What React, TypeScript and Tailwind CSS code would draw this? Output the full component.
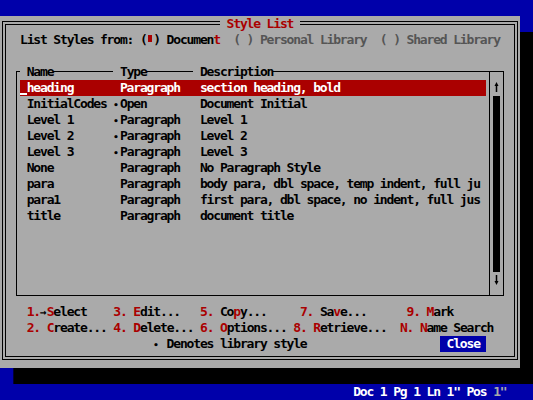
const RED = "text-[#aa0000]";
const DIM = "text-[#555555]";

type Piece = [string, string?];

const styles = [
  { name: "InitialCodes", lib: true, type: "Open", desc: "Document Initial" },
  { name: "Level 1", lib: true, type: "Paragraph", desc: "Level 1" },
  { name: "Level 2", lib: true, type: "Paragraph", desc: "Level 2" },
  { name: "Level 3", lib: true, type: "Paragraph", desc: "Level 3" },
  { name: "None", lib: false, type: "Paragraph", desc: "No Paragraph Style" },
  { name: "para", lib: false, type: "Paragraph", desc: "body para, dbl space, temp indent, full ju" },
  { name: "para1", lib: false, type: "Paragraph", desc: "first para, dbl space, no indent, full jus" },
  { name: "title", lib: false, type: "Paragraph", desc: "document title" },
];

// small glyphs keep the 6.66px cell width
const SMALL = "text-[9px] tracking-[1.245px]";
const ARROW = "text-[11px] tracking-[0.04px]";

const menu: Piece[][] = [
  [
    ["    "], ["1.", RED], ["→", ARROW], ["S", RED], ["elect    "],
    ["3.", RED], [" "], ["E", RED], ["dit...   "],
    ["5.", RED], [" Co"], ["p", RED], ["y...     "],
    ["7.", RED], [" Sa"], ["v", RED], ["e...      "],
    ["9.", RED], [" "], ["M", RED], ["ark"],
  ],
  [
    ["    "], ["2.", RED], [" "], ["C", RED], ["reate... "],
    ["4.", RED], [" "], ["D", RED], ["elete... "],
    ["6.", RED], [" "], ["O", RED], ["ptions... "],
    ["8.", RED], [" "], ["R", RED], ["etrieve...  "],
    ["N.", RED], [" "], ["N", RED], ["ame Search"],
  ],
];

function Line({ parts }: { parts: Piece[] }) {
  return (
    <div className="h-4 leading-4 whitespace-pre">
      {parts.map(([t, c], i) => (
        <span key={i} className={c}>
          {t}
        </span>
      ))}
    </div>
  );
}

function Arrow({ down }: { down?: boolean }) {
  return (
    <svg width="7" height="16" viewBox="0 0 7 16" className="ml-[3px] shrink-0">
      <path
        d={down ? "M3.5 13 L1.5 9 H2.75 V3 H4.25 V9 H5.5 Z" : "M3.5 2 L1.5 6 H2.75 V12 H4.25 V6 H5.5 Z"}
        fill="#000"
      />
    </svg>
  );
}

function StyleList() {
  return (
    <div className="flex h-[240px] flex-col">
      <div className="ml-[16px] mt-[7px] flex h-[225px] w-[488px] border border-black">
        <div className="w-[472px]">
          <div className="-ml-[17px] -mt-[8px] flex flex-col">
            <Line
              parts={[
                ["   "],
                [" Name", "bg-[#aaaaaa]"],
                ["         "],
                [" Type", "bg-[#aaaaaa]"],
                ["       "],
                [" Description", "bg-[#aaaaaa]"],
              ]}
            />
            <div className="h-4 leading-4 whitespace-pre">
              {"   "}
              <span className="inline-block h-4 w-[466px] bg-[#aa0000] align-top text-white">
                <span className="inline-block h-[15px] w-[6.6625px] border-b-2 border-white align-top" />
                {"heading".padEnd(14) + "Paragraph".padEnd(12) + "section heading, bold"}
              </span>
            </div>
            {styles.map((s) => (
              <div key={s.name} className="h-4 leading-4 whitespace-pre">
                {"    " + s.name.padEnd(13)}
                <span className={SMALL}>{s.lib ? "•" : " "}</span>
                {s.type.padEnd(12) + s.desc}
              </div>
            ))}
          </div>
        </div>
        <div className="flex w-[14px] flex-col border-l border-black pt-[8px]">
          <Arrow />
          <div className="ml-[3px] h-[176px] w-[7px] bg-black" />
          <Arrow down />
        </div>
      </div>
    </div>
  );
}

export default function App() {
  return (
    <div className="flex h-[400px] w-[533px] flex-col overflow-hidden bg-[#0000aa] font-['DejaVu_Sans_Mono',monospace] text-[13px] font-bold tracking-[-1.163px] text-black">
      <div className="h-4 shrink-0" />
      <div className="h-[352px] w-[520px] shrink-0 bg-[#aaaaaa] px-[2px] pt-[5px] shadow-[13.33px_16px_0_0_#000]">
        <div className="h-[339px] border border-black p-[2px]">
          <div className="h-[333px] border border-black">
            <div className="-ml-[6px] -mt-[9px] flex flex-col">
              <div className="h-4 leading-4 whitespace-pre">
                {" ".repeat(33)}
                <span className={`inline-block h-4 bg-[#aaaaaa] align-top ${RED}`}> Style List </span>
              </div>
              <div className="h-4 leading-4 whitespace-pre">
                {"   List Styles from: ("}
                <span className="inline-block h-4 w-[6.6625px] pl-[1.5px] pt-[3px] align-top">
                  <span className="block h-[7px] w-[4px] bg-[#aa0000]" />
                </span>
                {") Documen"}
                <span className={RED}>t</span>
                {"  "}
                <span className={DIM}>( ) Personal Library  ( ) Shared Library</span>
              </div>
              <div className="h-4" />
              <StyleList />
              <Line parts={menu[0]} />
              <Line parts={menu[1]} />
              <div className="h-4 leading-4 whitespace-pre">
                {" ".repeat(23)}
                <span className={SMALL}>•</span>
                {" Denotes library style" + " ".repeat(20)}
                <span className="inline-block h-4 bg-[#0000aa] align-top text-white"> Close </span>
              </div>
            </div>
          </div>
        </div>
      </div>
      <div className="h-4 shrink-0" />
      <div className="h-4 shrink-0 leading-4 whitespace-pre text-white">
        {" ".repeat(53) + 'Doc 1 Pg 1 Ln 1" Pos '}
        <span className="text-[#aaaaaa]">1"</span>
      </div>
    </div>
  );
}
